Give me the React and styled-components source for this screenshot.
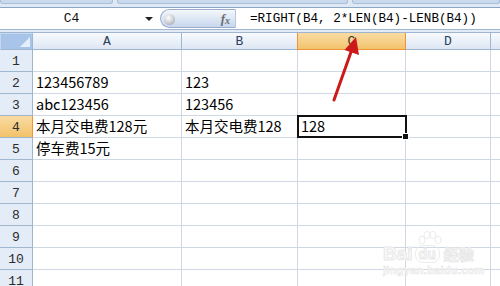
import styled, { createGlobalStyle } from "styled-components";

const GlobalStyle = createGlobalStyle`
  html, body {
    margin: 0;
    padding: 0;
    background: #ffffff;
    overflow: hidden;
  }
`;

const COLUMNS = [
  { key: "A", width: 149 },
  { key: "B", width: 116 },
  { key: "C", width: 108 },
  { key: "D", width: 85 },
  { key: "E", width: 30 },
];

const ROWS = [
  {},
  { A: "123456789", B: "123" },
  { A: "abc123456", B: "123456" },
  { A: "本月交电费128元", B: "本月交电费128", C: "128" },
  { A: "停车费15元" },
  {},
  {},
  {},
  {},
  {},
  {},
];

const ACTIVE = { col: "C", row: 4 };

function App() {
  return (
    <Page>
      <GlobalStyle />
      <Ribbon>
        <RibbonPanel $width={114} />
        <RibbonPanel $width={234} />
        <RibbonPanel $width={150} />
      </Ribbon>
      <FormulaBar>
        <NameBox>
          <NameText>C4</NameText>
          <DropArrow />
        </NameBox>
        <FxArea>
          <Knob />
          <FxLabel>
            f<sub>x</sub>
          </FxLabel>
        </FxArea>
        <FormulaInput>=RIGHT(B4, 2*LEN(B4)-LENB(B4))</FormulaInput>
      </FormulaBar>
      <Band />
      <Sheet>
        <Corner />
        {COLUMNS.map((c) => (
          <ColHeader key={c.key} $selected={c.key === ACTIVE.col}>
            {c.key === "E" ? "" : c.key}
          </ColHeader>
        ))}
        {ROWS.map((row, i) => {
          const n = i + 1;
          return [
            <RowHeader key={`h${n}`} $selected={n === ACTIVE.row}>
              {n}
            </RowHeader>,
            ...COLUMNS.map((c) => (
              <Cell
                key={`${c.key}${n}`}
                $active={c.key === ACTIVE.col && n === ACTIVE.row}
              >
                {row[c.key] || ""}
              </Cell>
            )),
          ];
        })}
      </Sheet>

      <Arrow width="500" height="286" viewBox="0 0 500 286">
        <line
          x1="334"
          y1="100"
          x2="351"
          y2="52"
          stroke="#cc1a1a"
          strokeWidth="3"
          strokeLinecap="round"
        />
        <polygon points="356,37 344.5,50 359,55" fill="#cc1a1a" />
      </Arrow>

      <Watermark>
        <Paw viewBox="0 0 30 16" width="30" height="16">
          <ellipse cx="7" cy="9" rx="3" ry="4" fill="none" stroke="#ececec" />
          <ellipse cx="12" cy="4" rx="3" ry="3.5" fill="none" stroke="#ececec" />
          <ellipse cx="18" cy="4" rx="3" ry="3.5" fill="none" stroke="#ececec" />
          <ellipse cx="23" cy="9" rx="3" ry="4" fill="none" stroke="#ececec" />
        </Paw>
        <BrandLine>
          <BrandBig>Bai</BrandBig>
          <BrandDu>du</BrandDu>
          <BrandCn>经验</BrandCn>
        </BrandLine>
        <BrandUrl>jingyan.baidu.com</BrandUrl>
      </Watermark>
    </Page>
  );
}

export default App;

const Page = styled.div`
  position: relative;
  width: 500px;
  height: 286px;
  overflow: hidden;
  background: #ffffff;
`;

const Ribbon = styled.div`
  display: flex;
  gap: 4px;
  height: 8px;
  background: #dfe9f5;
  border-bottom: 1px solid #8ca6c6;
  box-sizing: border-box;
`;

const RibbonPanel = styled.div`
  width: ${(p) => p.$width}px;
  height: 3px;
  background: #c9daef;
  border: 1px solid #a7bdd8;
  border-top: none;
  border-radius: 0 0 3px 3px;
`;

const FormulaBar = styled.div`
  display: flex;
  height: 22px;
  background: #ffffff;
  border-bottom: 1px solid #9fb5d0;
  box-sizing: border-box;
`;

const NameBox = styled.div`
  display: flex;
  align-items: center;
  width: 160px;
  box-sizing: border-box;
  padding-right: 7px;
`;

const NameText = styled.span`
  flex: 1;
  text-align: center;
  font-family: "Liberation Mono", monospace;
  font-size: 13px;
  color: #111;
  padding-right: 2px;
`;

const DropArrow = styled.span`
  width: 0;
  height: 0;
  border-left: 4px solid transparent;
  border-right: 4px solid transparent;
  border-top: 4px solid #222;
`;

const FxArea = styled.div`
  position: relative;
  display: flex;
  align-items: center;
  justify-content: flex-end;
  width: 76px;
  margin: 1px 0;
  padding-right: 5px;
  box-sizing: border-box;
  border-radius: 10px 0 0 10px;
  border: 1px solid #98add0;
  border-right: 1px solid #b7c7dd;
  background: linear-gradient(#f4f7fc 0%, #dde7f5 50%, #c7d7ee 100%);
`;

const Knob = styled.span`
  position: absolute;
  left: 3px;
  top: 4px;
  width: 11px;
  height: 11px;
  border-radius: 50%;
  background: radial-gradient(circle at 40% 35%, #ffffff 0%, #c9ccd2 55%, #8f969f 100%);
`;

const FxLabel = styled.span`
  font-family: "Liberation Serif", serif;
  font-style: italic;
  font-weight: bold;
  font-size: 13px;
  color: #6d6d6d;
  line-height: 1;

  & sub {
    font-size: 10px;
    vertical-align: -1px;
  }
`;

const FormulaInput = styled.div`
  flex: 1;
  display: flex;
  align-items: center;
  padding-left: 14px;
  font-family: "Liberation Mono", monospace;
  font-size: 12.6px;
  color: #000;
  white-space: nowrap;
  overflow: hidden;
`;

const Band = styled.div`
  height: 3px;
  background: #e3ebf6;
  border-bottom: 1px solid #9fb5d0;
  box-sizing: border-box;
`;

const Sheet = styled.div`
  display: grid;
  grid-template-columns: 33px ${COLUMNS.map((c) => `${c.width}px`).join(" ")};
  grid-template-rows: 17px repeat(${ROWS.length}, 22px);
`;

const Corner = styled.div`
  position: relative;
  box-sizing: border-box;
  background: #a9c4e9;
  border: 1px solid #c6d8f0;
  border-right: 1px solid #9eb6ce;
  border-bottom: 1px solid #9eb6ce;

  &::after {
    content: "";
    position: absolute;
    right: 2px;
    bottom: 2px;
    width: 0;
    height: 0;
    border-left: 10px solid transparent;
    border-bottom: 10px solid #e6eef9;
  }
`;

const ColHeader = styled.div`
  display: flex;
  align-items: center;
  justify-content: center;
  box-sizing: border-box;
  font-family: "Liberation Mono", monospace;
  font-size: 13px;
  color: ${(p) => (p.$selected ? "#3a3a3a" : "#27415f")};
  background: ${(p) =>
    p.$selected
      ? "linear-gradient(#f9dba3 0%, #f6cf87 55%, #f2c26a 100%)"
      : "linear-gradient(#f7f9fd 0%, #eaf0f8 55%, #dde6f3 100%)"};
  border-right: 1px solid ${(p) => (p.$selected ? "#f29436" : "#9eb6ce")};
  border-bottom: 1px solid ${(p) => (p.$selected ? "#f29436" : "#9eb6ce")};
  border-left: ${(p) => (p.$selected ? "1px solid #f29436" : "none")};
  margin-left: ${(p) => (p.$selected ? "-1px" : "0")};
`;

const RowHeader = styled.div`
  display: flex;
  align-items: flex-end;
  justify-content: center;
  padding-bottom: 2px;
  box-sizing: border-box;
  font-family: "Liberation Mono", monospace;
  font-size: 13px;
  color: #2c2c2c;
  background: ${(p) =>
    p.$selected ? "linear-gradient(#f9dba3, #f2c26a)" : "#e4ecf7"};
  border-right: 1px solid ${(p) => (p.$selected ? "#f29436" : "#9eb6ce")};
  border-bottom: 1px solid #9eb6ce;
`;

const Cell = styled.div`
  position: relative;
  display: flex;
  align-items: flex-end;
  padding: 0 0 2px 3px;
  box-sizing: border-box;
  font-family: "Noto Sans CJK SC", "Liberation Sans", sans-serif;
  font-size: 14.5px;
  line-height: 18px;
  color: #000;
  white-space: nowrap;
  border-right: 1px solid #d0d7e5;
  border-bottom: 1px solid #d0d7e5;

  ${(p) =>
    p.$active &&
    `
    &::after {
      content: "";
      position: absolute;
      left: -1px;
      top: -1px;
      right: -2px;
      bottom: -1px;
      border: 2px solid #111;
    }
    &::before {
      content: "";
      position: absolute;
      right: -4px;
      bottom: -3px;
      width: 5px;
      height: 5px;
      background: #111;
      border: 1px solid #fff;
      z-index: 1;
    }
  `}
`;

const Arrow = styled.svg`
  position: absolute;
  left: 0;
  top: 0;
  pointer-events: none;
`;

const Watermark = styled.div`
  position: absolute;
  left: 383px;
  top: 231px;
  display: flex;
  flex-direction: column;
  align-items: flex-start;
  pointer-events: none;
`;

const Paw = styled.svg`
  margin-left: 32px;
  display: block;
`;

const BrandLine = styled.div`
  display: flex;
  align-items: center;
  gap: 2px;
  margin-top: -2px;
`;

const BrandBig = styled.span`
  font-family: "Liberation Sans", sans-serif;
  font-weight: bold;
  font-size: 19px;
  line-height: 18px;
  color: #fcfcfc;
  -webkit-text-stroke: 1px #e8e8e8;
`;

const BrandDu = styled.span`
  font-family: "Liberation Sans", sans-serif;
  font-weight: bold;
  font-size: 14px;
  line-height: 16px;
  padding: 0 3px;
  border-radius: 8px;
  color: #fcfcfc;
  -webkit-text-stroke: 1px #e8e8e8;
  border: 1px solid #ececec;
`;

const BrandCn = styled.span`
  font-family: "Noto Sans CJK SC", sans-serif;
  font-weight: bold;
  font-size: 15px;
  line-height: 16px;
  color: #fcfcfc;
  -webkit-text-stroke: 1px #e8e8e8;
  margin-left: 2px;
`;

const BrandUrl = styled.span`
  font-family: "Liberation Sans", sans-serif;
  font-weight: bold;
  font-size: 11px;
  letter-spacing: 0.3px;
  color: #f8f8f8;
  -webkit-text-stroke: 0.6px #e8e8e8;
  margin-top: 1px;
`;
